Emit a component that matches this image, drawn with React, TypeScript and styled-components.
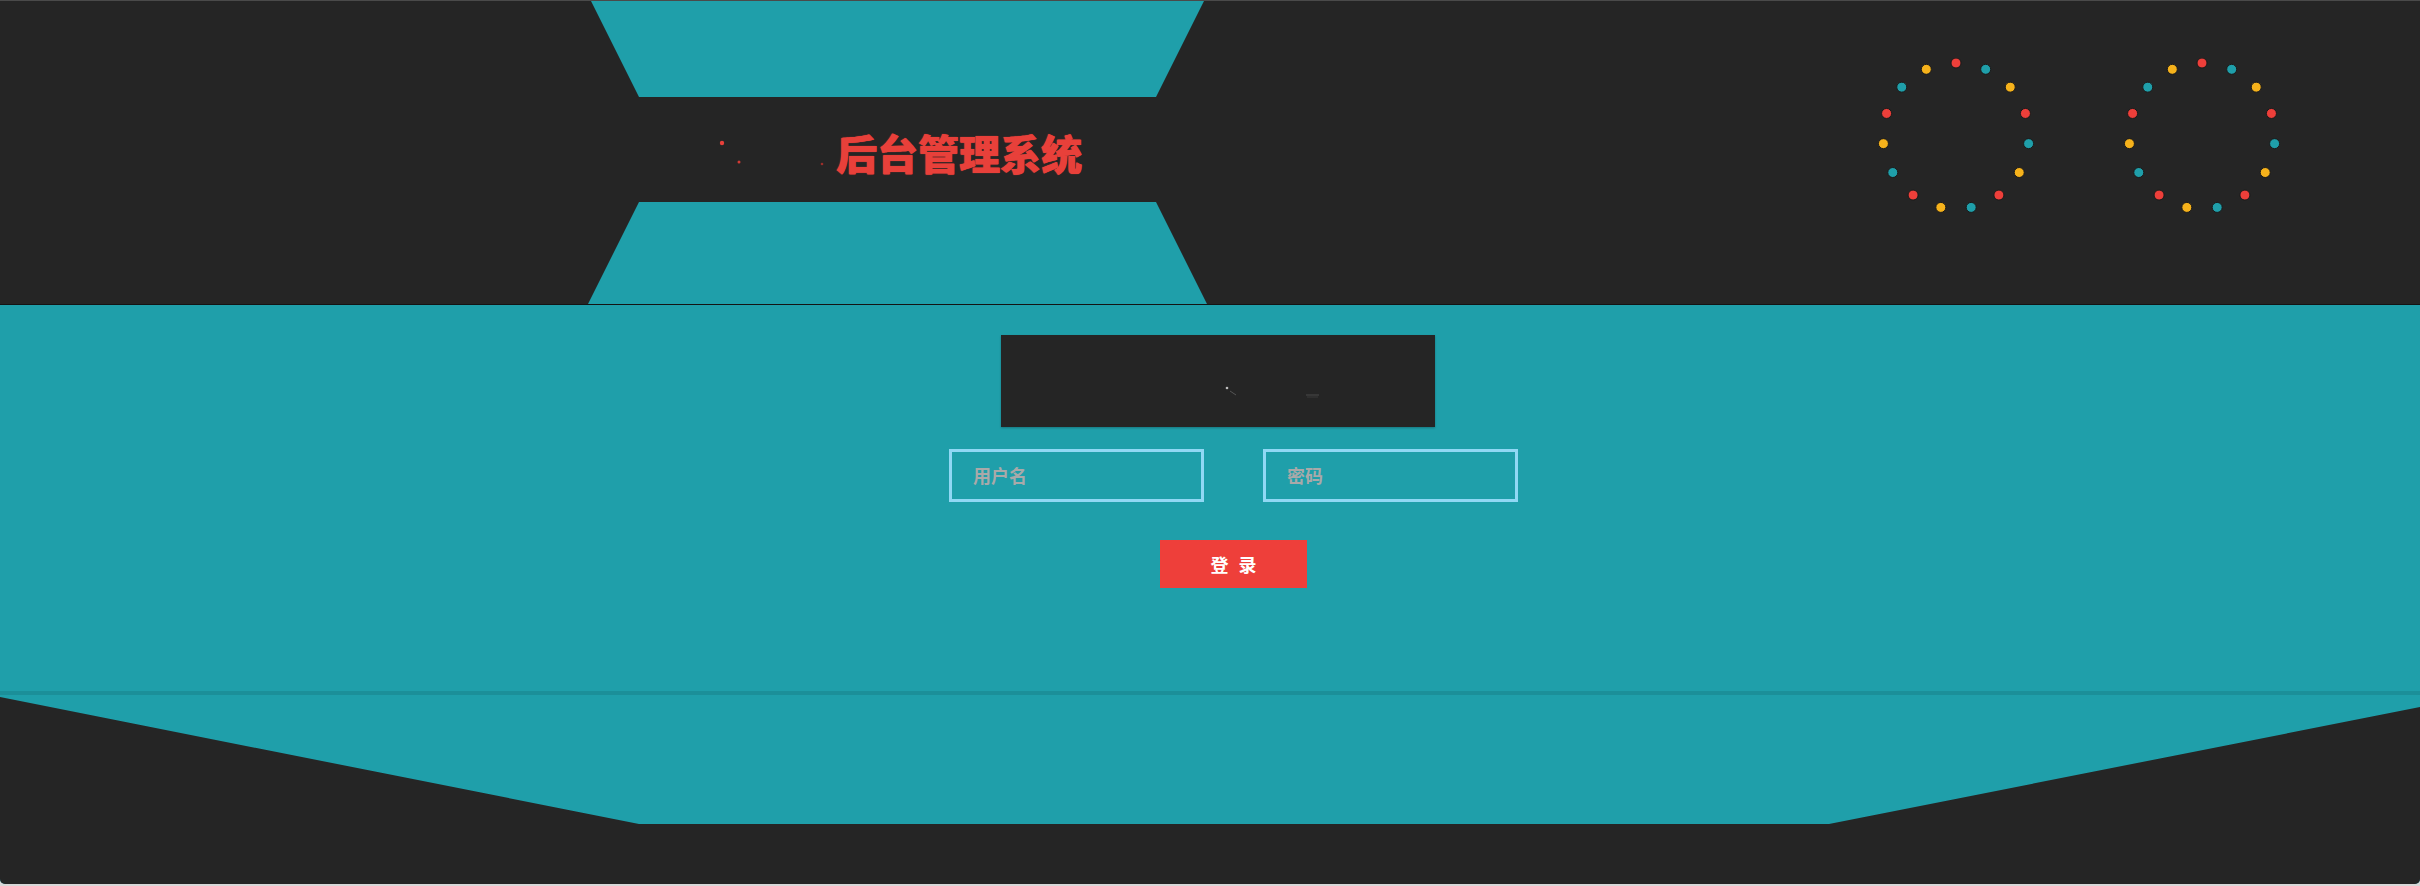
import React from "react";
import styled, { createGlobalStyle } from "styled-components";

const GlobalStyle = createGlobalStyle`
  html, body {
    margin: 0;
    padding: 0;
    background: #d8d8d8;
    font-family: "Noto Sans CJK SC", "Noto Sans", sans-serif;
  }
  * { box-sizing: border-box; }
`;

const TEAL = "#1f9faa";
const DARK = "#252525";
const RED = "#ee3f3a";
const YELLOW = "#f6b21b";

const Frame = styled.div`
  width: 2420px;
  height: 884px;
  display: flex;
  flex-direction: column;
  background: ${TEAL};
  border-top: 1px solid #4a4a4a;
  border-radius: 0 0 5px 5px;
  overflow: hidden;
`;

const Header = styled.header`
  height: 304px;
  flex: 0 0 auto;
  display: flex;
  background: ${DARK};
  border-bottom: 1px solid #141414;
`;

const LeftSpace = styled.div`
  flex: 0 0 588px;
`;

const ShapeColumn = styled.div`
  flex: 0 0 619px;
  display: flex;
  flex-direction: column;
`;

const Trapezoid = styled.div<{ $flip?: boolean; $h: number }>`
  height: ${(p) => p.$h}px;
  background: ${TEAL};
  clip-path: ${(p) =>
    p.$flip
      ? "polygon(51px 0, 568px 0, 100% 100%, 0 100%)"
      : "polygon(3px 0, 616px 0, 568px 100%, 51px 100%)"};
`;

const TitleBand = styled.div`
  height: 105px;
  display: flex;
  align-items: center;
  padding-left: 130px;
`;

const Sparks = styled.svg`
  flex: 0 0 auto;
  align-self: stretch;
`;

const Title = styled.h1`
  margin: 0 0 0 4px;
  padding-top: 5px;
  font-family: "Noto Sans CJK SC", "Noto Sans", sans-serif;
  font-size: 41px;
  line-height: 1;
  font-weight: 900;
  color: #e8403a;
  letter-spacing: 0;
  text-shadow: 0 0 1px #e8403a, 0.5px 0 0 #e8403a;
  white-space: nowrap;
`;

const RingArea = styled.div`
  flex: 1;
  display: flex;
  justify-content: flex-end;
  align-items: flex-start;
  padding: 57px 140px 0 0;
  gap: 90px;
`;

const Main = styled.main`
  height: 386px;
  flex: 0 0 auto;
  display: flex;
  flex-direction: column;
  align-items: center;
  padding-top: 30px;
`;

const Form = styled.form`
  width: 569px;
  margin-left: 47px;
  display: flex;
  flex-direction: column;
`;

const CodeBox = styled.div`
  width: 434px;
  height: 92px;
  margin-left: 52px;
  background: ${DARK};
  box-shadow: 0 1px 2px rgba(0, 0, 0, 0.25);
`;

const InputRow = styled.div`
  margin-top: 22px;
  display: flex;
  justify-content: space-between;
`;

const Field = styled.input`
  width: 255px;
  height: 53px;
  border: 3px solid #90d8f4;
  background: transparent;
  padding: 0 0 2px 21px;
  font-family: "Noto Sans CJK SC", "Noto Sans", sans-serif;
  font-size: 18px;
  font-weight: 700;
  color: #ffffff;
  outline: none;
  &::placeholder {
    color: #a9a9a9;
  }
`;

const LoginButton = styled.button`
  margin-top: 38px;
  align-self: center;
  width: 147px;
  height: 48px;
  border: none;
  background: ${RED};
  color: #ffffff;
  font-family: "Noto Sans CJK SC", "Noto Sans", sans-serif;
  font-size: 18px;
  font-weight: 700;
  letter-spacing: 3px;
  padding: 0 0 0 3px;
  cursor: pointer;
`;

const Divider = styled.div`
  height: 4px;
  flex: 0 0 auto;
  background: #1b8f99;
`;

const Bottom = styled.footer`
  flex: 1;
  display: flex;
`;

const BottomShape = styled.div`
  flex: 1;
  background: ${DARK};
  clip-path: polygon(0 2px, 639px 129px, 1829px 129px, 100% 12px, 100% 100%, 0 100%);
`;

const COLORS = [RED, TEAL, YELLOW];

function Ring() {
  const n = 15;
  const r = 73;
  const c = 78;
  return (
    <svg width={156} height={156} viewBox="0 0 156 156">
      {Array.from({ length: n }).map((_, i) => {
        const a = -Math.PI / 2 + (i * 2 * Math.PI) / n;
        return (
          <circle
            key={i}
            cx={c + r * Math.cos(a)}
            cy={c + r * Math.sin(a)}
            r={5}
            fill={COLORS[i % 3]}
            stroke="#1a1a1a"
            strokeWidth={1}
          />
        );
      })}
    </svg>
  );
}

export default function App() {
  return (
    <>
      <GlobalStyle />
      <Frame>
        <Header>
          <LeftSpace />
          <ShapeColumn>
            <Trapezoid $h={97} />
            <TitleBand>
              <Sparks width={114} height={105} viewBox="0 0 114 105">
                <circle cx={4} cy={46} r={2.2} fill="#e8403a" />
                <circle cx={21} cy={65} r={1.5} fill="#d33a34" />
                <circle cx={104} cy={67} r={1.3} fill="#9a2e2a" />
              </Sparks>
              <Title>后台管理系统</Title>
            </TitleBand>
            <Trapezoid $h={103} $flip />
          </ShapeColumn>
          <RingArea>
            <Ring />
            <Ring />
          </RingArea>
        </Header>
        <Main>
          <Form onSubmit={(e) => e.preventDefault()}>
            <CodeBox>
              <svg width={434} height={92} viewBox="0 0 434 92">
                <circle cx={226} cy={53} r={1.3} fill="#bdbdbd" />
                <line x1={229} y1={56} x2={235} y2={60} stroke="#555" strokeWidth={1} />
                <line x1={305} y1={60} x2={318} y2={60} stroke="#4a4a4a" strokeWidth={1} />
                <line x1={306} y1={62} x2={317} y2={62} stroke="#3a3a3a" strokeWidth={1} />
              </svg>
            </CodeBox>
            <InputRow>
              <Field placeholder="用户名" />
              <Field type="password" placeholder="密码" />
            </InputRow>
            <LoginButton type="submit">登 录</LoginButton>
          </Form>
        </Main>
        <Divider />
        <Bottom>
          <BottomShape />
        </Bottom>
      </Frame>
    </>
  );
}
